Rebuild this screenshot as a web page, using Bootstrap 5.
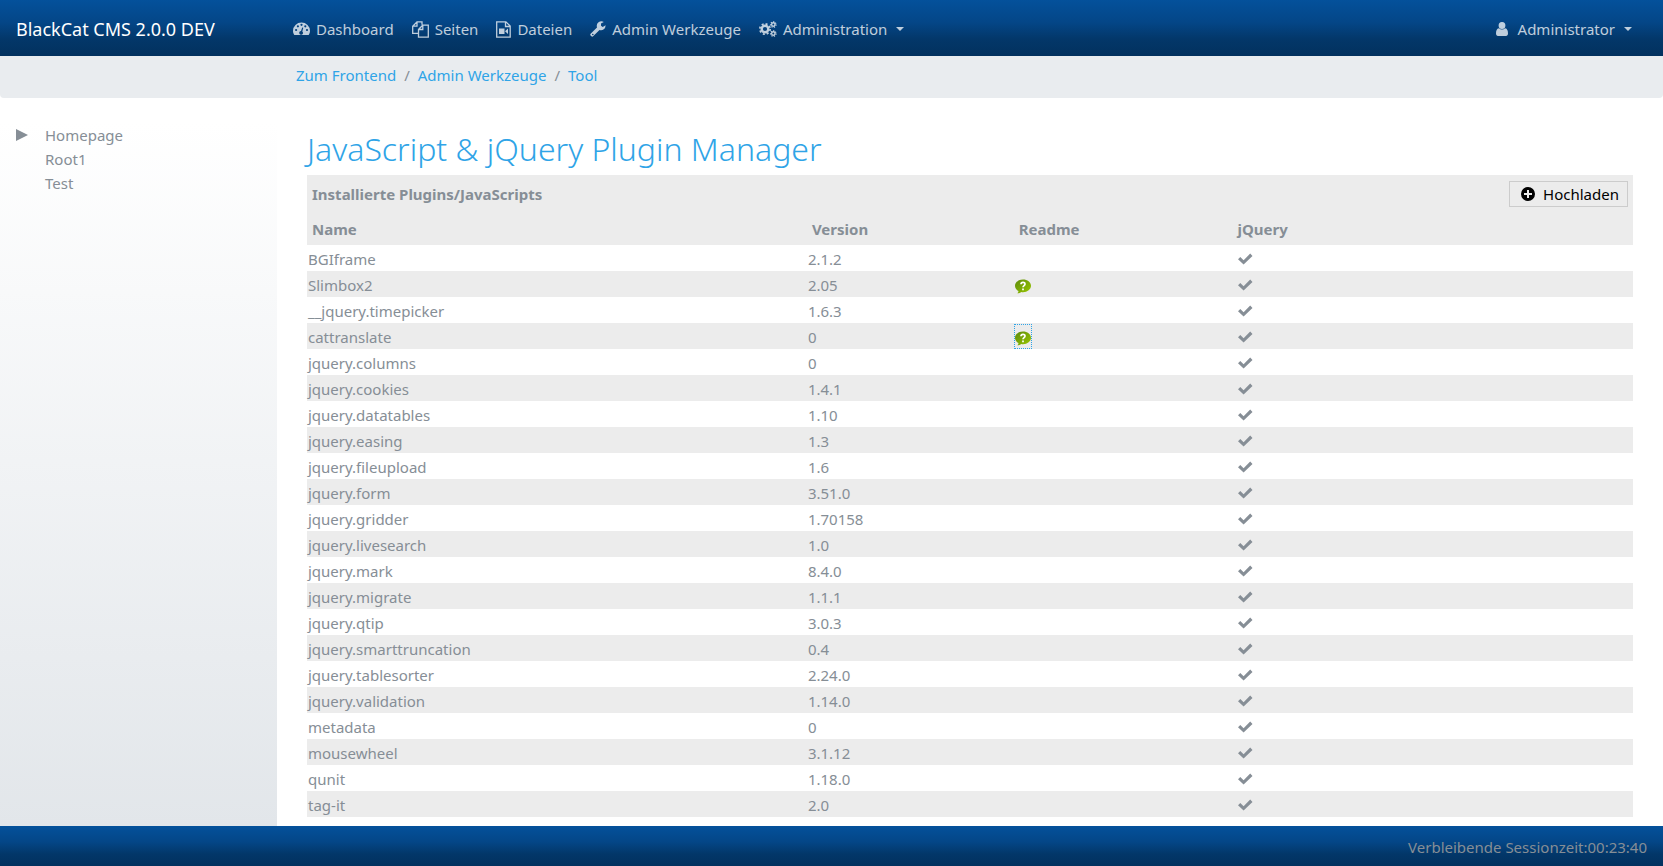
<!DOCTYPE html>
<html lang="de">
<head>
<meta charset="utf-8">
<meta name="viewport" content="width=device-width, initial-scale=1">
<title>BlackCat CMS</title>
<link href="https://cdn.jsdelivr.net/npm/bootstrap@5.3.0/dist/css/bootstrap.min.css" rel="stylesheet">
<style>
body{font-family:"Noto Sans","Open Sans",sans-serif;font-size:15px;line-height:24px;color:#868e96;background:#fff}
a{color:#2fa4e7;text-decoration:none}
.bar{background-image:linear-gradient(#04519b,#044687 40%,#033769 70%,#02315e)}
.topbar{height:56px;padding:2px 16px 0}
.topbar .navbar-brand{width:268px;margin:0;font-size:18px;color:#fff}
.topbar .navbar-nav .nav-link{color:rgba(255,255,255,.75);padding:8px 9px;white-space:nowrap;display:flex;align-items:center;gap:6px}
.topbar .dropdown-toggle::after{margin-left:3px}
.topbar .user-menu{margin-left:auto;margin-right:6px}
.ico{fill:currentColor;flex:none}
.crumbs{min-height:42px;background:#e9ecef;border-radius:0 0 4px 4px;padding:7px 16px 9px 296px;margin:0}
.crumbs .breadcrumb-item+.breadcrumb-item::before{color:#868e96}
.main-area{height:calc(100vh - 138px)}
.side{width:277px;flex:none;padding:0 16px;margin-top:25px;background:linear-gradient(#fff,#e2e6ea)}
.side a{color:#868e96}
.side .twisty{width:29px;flex:none;display:flex;align-items:center}
.content{padding:32px 30px 0;overflow:hidden}
h1{font-size:32px;line-height:38px;color:#2fa4e7;font-weight:300;margin:0 0 7px}
.panel-top{background:#ececec;height:39px;padding:0 5px 2px}
.upload{background:#ececec;border:1px solid #ccc;color:#000;height:26px;line-height:24px;padding:0 8px 0 11px;display:flex;align-items:center;gap:8px}
.plugins{width:100%;table-layout:fixed;border-collapse:collapse}
.plugins th{height:31px;background:#ececec;padding:0 5px 2px;font-size:15px}
.plugins th:last-child{padding-left:1px}
.plugins td{height:26px;padding:2px 1px 0}
.plugins td:nth-child(3){padding:1px 0 0}
.plugins tbody tr:nth-child(even){background:#ececec}
.plugins svg{display:block}
.readme{display:block;width:18px;height:25px;padding:7px 1px 0}
.readme.current{outline:1px dotted #2fa4e7;outline-offset:-1px}
.footbar{height:40px;padding:2px 16px 0}
</style>
</head>
<body class="vh-100 overflow-hidden">
<svg width="0" height="0" class="position-absolute" aria-hidden="true">
<defs>
<linearGradient id="green" x2="1" y2="1"><stop offset="0" stop-color="#5d8a0c"/><stop offset="1" stop-color="#9ac800"/></linearGradient>
<symbol id="check" viewBox="0 0 15 12"><path d="M0 6.3 2.3 4 5.6 7.2 12.2.6 14.5 2.9 5.6 11.6z"/></symbol>
<symbol id="bubble" viewBox="0 0 16 15"><path fill="url(#green)" d="M8 .5c4.400 0 8 2.700 8 6.300s-3.600 6.400-8 6.400c-.6 0-1.200 0-1.700-.2-.9.800-2.200 1.300-4 1.300.8-.6 1.200-1.300 1.200-2.300C1.300 10.900 0 9 0 6.800 0 3.200 3.600.5 8 .5z"/><path fill="none" stroke="#fff" stroke-width="1.700" d="M6 5.200c0-2.300 4-2.300 4-.2 0 1.600-2 1.500-2 3.300M8 9.500v1.700"/></symbol>
</defs></svg>
<nav class="navbar navbar-expand bar topbar">
<a class="navbar-brand" href="#">BlackCat CMS 2.0.0 DEV</a>
<ul class="navbar-nav">
<li class="nav-item"><a class="nav-link" href="#"><svg class="ico" width="17" height="14" viewBox="0 0 17 14"><path fill-rule="evenodd" d="M1.300 13C.5 11.800 0 10.300 0 8.700a8.500 8.200 0 0 1 17 0c0 1.600-.5 3.100-1.300 4.300zM2 8a1.100 1.100 0 1 0 2.200 0A1.100 1.100 0 1 0 2 8zM3.800 4.300a1.100 1.100 0 1 0 2.200 0 1.100 1.100 0 1 0-2.200 0zM7.400 2.800a1.100 1.100 0 1 0 2.200 0 1.100 1.100 0 1 0-2.200 0zM11.200 4.300a1.100 1.100 0 1 0 2.200 0 1.100 1.100 0 1 0-2.200 0zM12.900 8a1.100 1.100 0 1 0 2.200 0 1.100 1.100 0 1 0-2.200 0zM9.200 5.500 8 9a1.900 1.900 0 1 0 1.300.4l1-3.600z"/></svg>Dashboard</a></li>
<li class="nav-item"><a class="nav-link" href="#"><svg class="ico" width="17" height="17" viewBox="0 0 17 17"><path fill="none" stroke="currentColor" stroke-width="1.300" d="M6.500 12.300H.7V5.200L5 .8h5v3M.7 5.200H5V.8M6.500 8.500 10.700 4.200h5.600v12H6.500zM6.500 8.500h4.300V4.200"/></svg>Seiten</a></li>
<li class="nav-item"><a class="nav-link" href="#"><svg class="ico" width="15" height="17" viewBox="0 0 15 17"><path fill="none" stroke="currentColor" stroke-width="1.300" d="M.7.8h9.200l4.300 4.300v11H.7zM9.500.8v4.700h4.700"/><path d="M3 7.500h5.500V13H3zM9 10.200l3-2.700V13z"/></svg>Dateien</a></li>
<li class="nav-item"><a class="nav-link" href="#"><svg class="ico" width="16" height="16" viewBox="0 0 16 16"><path fill-rule="evenodd" d="M.6 12.800 7 6.400A4.700 4.700 0 0 1 13.800.9L11 2.600v2.200L12.700 6l2.900-1.700A4.600 4.600 0 0 1 9.500 8.900l-6.400 6.400c-.5.500-1.200.5-1.700 0l-.8-.8c-.5-.5-.5-1.200 0-1.700zM2 13.500a.8.8 0 1 0 1.600 0 .8.8 0 1 0-1.600 0z"/></svg>Admin Werkzeuge</a></li>
<li class="nav-item dropdown"><a class="nav-link dropdown-toggle" href="#"><svg class="ico" width="18" height="16" viewBox="0 0 18 16"><g fill="none" stroke="currentColor"><circle cx="6" cy="8" r="3.300" stroke-width="2.400"/><circle cx="6" cy="8" r="5.200" stroke-width="1.600" stroke-dasharray="2.040 2.040"/><circle cx="14.300" cy="3.500" r="1.700" stroke-width="1.400"/><circle cx="14.300" cy="3.500" r="2.800" stroke-width="1.100" stroke-dasharray="1.260 1.260"/><circle cx="14.300" cy="12.500" r="1.700" stroke-width="1.400"/><circle cx="14.300" cy="12.500" r="2.800" stroke-width="1.100" stroke-dasharray="1.260 1.260"/></g></svg>Administration</a></li>
</ul>
<ul class="navbar-nav user-menu"><li class="nav-item dropdown"><a class="nav-link dropdown-toggle" href="#"><svg class="ico me-1" width="12" height="14" viewBox="0 0 12 14"><path d="M2.600 3.500a3.400 3.500 0 1 1 6.800 0 3.400 3.500 0 1 1-6.800 0zM2.800 6.300c1.800 1.600 4.600 1.600 6.400 0C11.200 6.600 12 8.800 12 11.500c0 1.500-.8 2.500-2 2.500H2c-1.200 0-2-1-2-2.500 0-2.700.8-4.900 2.800-5.200z"/></svg>Administrator</a></li></ul>
</nav>
<nav aria-label="breadcrumb"><ol class="breadcrumb crumbs">
<li class="breadcrumb-item"><a href="#">Zum Frontend</a></li><li class="breadcrumb-item"><a href="#">Admin Werkzeuge</a></li><li class="breadcrumb-item"><a href="#">Tool</a></li>
</ol></nav>
<div class="d-flex main-area">
<aside class="side"><ul class="list-unstyled m-0">
<li class="d-flex"><span class="twisty"><svg class="ico" width="12" height="12" viewBox="0 0 12 12"><path d="M0 0 12 6 0 12z"/></svg></span><a href="#">Homepage</a></li>
<li class="d-flex"><span class="twisty"></span><a href="#">Root1</a></li>
<li class="d-flex"><span class="twisty"></span><a href="#">Test</a></li>
</ul></aside>
<main class="content flex-grow-1">
<h1>JavaScript &amp; jQuery Plugin Manager</h1>
<div class="panel-top d-flex align-items-center justify-content-between"><strong>Installierte Plugins/JavaScripts</strong>
<button class="upload" type="button"><svg class="ico" width="14" height="14" viewBox="0 0 14 14"><path fill-rule="evenodd" d="M0 7a7 7 0 1 1 14 0A7 7 0 1 1 0 7zM6 3v3H3v2h3v3h2V8h3V6H8V3z"/></svg>Hochladen</button></div>
<table class="plugins">
<colgroup><col style="width:37.700%"><col style="width:15.600%"><col style="width:16.800%"><col></colgroup>
<thead><tr><th>Name</th><th>Version</th><th>Readme</th><th>jQuery</th></tr></thead>
<tbody id="rows"></tbody>
</table>
</main>
</div>
<footer class="bar footbar d-flex align-items-center justify-content-end">Verbleibende Sessionzeit:00:23:40</footer>
<script>
const plugins=[["BGIframe","2.1.2"],["Slimbox2","2.05",1],["__jquery.timepicker","1.6.3"],["cattranslate","0",2],["jquery.columns","0"],["jquery.cookies","1.4.1"],["jquery.datatables","1.10"],["jquery.easing","1.3"],["jquery.fileupload","1.6"],["jquery.form","3.51.0"],["jquery.gridder","1.70158"],["jquery.livesearch","1.0"],["jquery.mark","8.4.0"],["jquery.migrate","1.1.1"],["jquery.qtip","3.0.3"],["jquery.smarttruncation","0.4"],["jquery.tablesorter","2.24.0"],["jquery.validation","1.14.0"],["metadata","0"],["mousewheel","3.1.12"],["qunit","1.18.0"],["tag-it","2.0"],["jquery.fieldsetwizard",""]];
document.getElementById("rows").innerHTML=plugins.map(([name,version,readme])=>`<tr><td>${name}</td><td>${version}</td><td>${readme?`<a href="#" class="readme${readme===2?" current":""}" aria-label="Readme"><svg width="16" height="15"><use href="#bubble"/></svg></a>`:""}</td><td>${version?'<svg class="ico" width="15" height="12"><use href="#check"/></svg>':""}</td></tr>`).join("");
</script>
<script src="https://cdn.jsdelivr.net/npm/bootstrap@5.3.0/dist/js/bootstrap.bundle.min.js"></script>
</body>
</html>
